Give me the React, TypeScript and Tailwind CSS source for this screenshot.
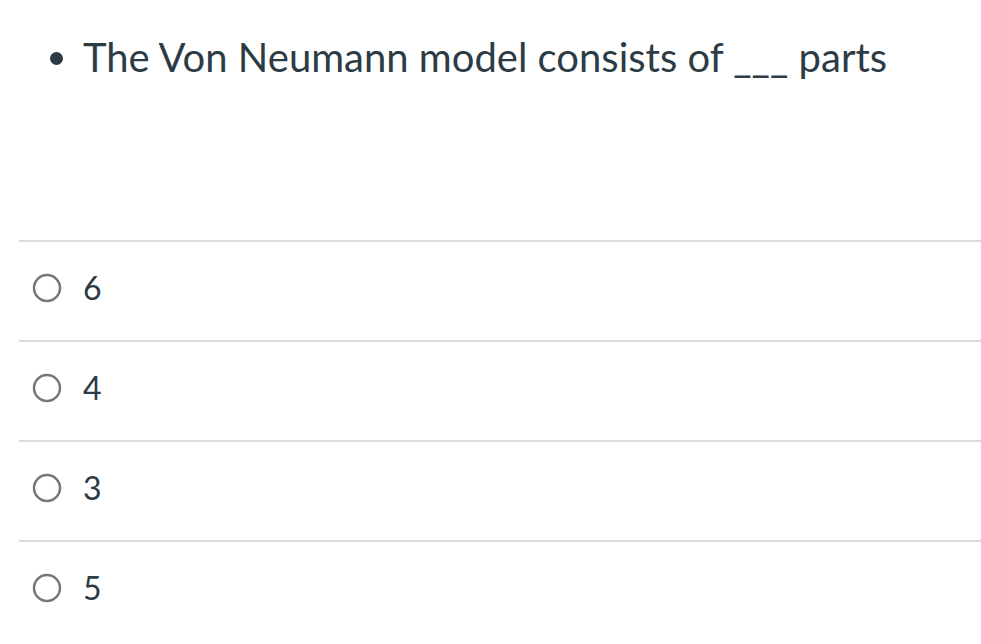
const options = ["6", "4", "3", "5"];

function Radio() {
  return (
    <svg width="30" height="30" viewBox="0 0 30 30" className="shrink-0">
      <circle cx="15" cy="15" r="13" fill="white" stroke="#777" strokeWidth="2.5" />
    </svg>
  );
}

export default function App() {
  return (
    <div className="w-[981px] h-[644px] bg-white overflow-hidden text-[#2d3b45]" style={{ fontFamily: "Lato, 'Open Sans', sans-serif" }}>
      {/* Question */}
      <ul className="list-disc pl-[83px] pt-[31px] h-[240px]">
        <li className="text-[40px] leading-[52px]">The Von Neumann model consists of ___ parts</li>
      </ul>

      {/* Answers */}
      <div className="ml-[19px]">
        {options.map((o) => (
          <div key={o} className="h-[100px] border-t-2 border-[#dcdcdc] flex items-center gap-[21px] pl-[13px] pb-[6px]">
            <Radio />
            <span className="text-[32px]">{o}</span>
          </div>
        ))}
      </div>
    </div>
  );
}
